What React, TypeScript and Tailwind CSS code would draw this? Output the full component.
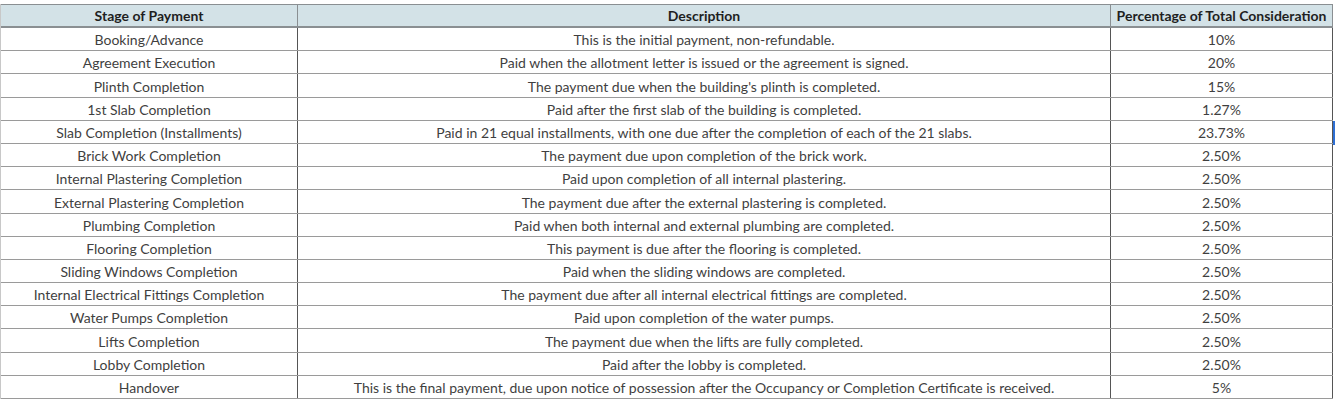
const rows: [string, string, string][] = [
    ['Booking/Advance', 'This is the initial payment, non-refundable.', '10%'],
    ['Agreement Execution', 'Paid when the allotment letter is issued or the agreement is signed.', '20%'],
    ['Plinth Completion', "The payment due when the building's plinth is completed.", '15%'],
    ['1st Slab Completion', 'Paid after the first slab of the building is completed.', '1.27%'],
    ['Slab Completion (Installments)', 'Paid in 21 equal installments, with one due after the completion of each of the 21 slabs.', '23.73%'],
    ['Brick Work Completion', 'The payment due upon completion of the brick work.', '2.50%'],
    ['Internal Plastering Completion', 'Paid upon completion of all internal plastering.', '2.50%'],
    ['External Plastering Completion', 'The payment due after the external plastering is completed.', '2.50%'],
    ['Plumbing Completion', 'Paid when both internal and external plumbing are completed.', '2.50%'],
    ['Flooring Completion', 'This payment is due after the flooring is completed.', '2.50%'],
    ['Sliding Windows Completion', 'Paid when the sliding windows are completed.', '2.50%'],
    ['Internal Electrical Fittings Completion', 'The payment due after all internal electrical fittings are completed.', '2.50%'],
    ['Water Pumps Completion', 'Paid upon completion of the water pumps.', '2.50%'],
    ['Lifts Completion', 'The payment due when the lifts are fully completed.', '2.50%'],
    ['Lobby Completion', 'Paid after the lobby is completed.', '2.50%'],
    ['Handover', 'This is the final payment, due upon notice of possession after the Occupancy or Completion Certificate is received.', '5%'],
]

const cell = 'flex items-end justify-center pb-[2px] leading-[16px] whitespace-nowrap border-r'

export default function App() {
    return (
        <div className="w-[1336px] h-[400px] overflow-hidden bg-white pt-[4px] font-['Lato',_'Open_Sans',_sans-serif] text-[14px] text-[#3f3f3f]">
            <div className="flex">
                <div className="w-[1333px] border-l border-[#c8c8c8]">
                    <div className="grid grid-cols-[297px_813px_222px] h-[24px] bg-[#d3e2e7] border-t border-b-2 border-[#8a8f92] font-bold text-[#1f1f1f]">
                        <div className={cell + ' border-[#8a8f92]'}>Stage of Payment</div>
                        <div className={cell + ' border-[#8a8f92]'}>Description</div>
                        <div className={cell + ' border-[#8a8f92]'}>Percentage of Total Consideration</div>
                    </div>
                    {rows.map((r, i) => (
                        <div key={i} className="grid grid-cols-[297px_813px_222px] h-[23.2px] border-b border-[#9a9a9a]">
                            <div className={cell + ' border-[#555]'}>{r[0]}</div>
                            <div className={cell + ' border-[#555]'}>{r[1]}</div>
                            <div className={cell + ' border-[#555]'}>{r[2]}</div>
                        </div>
                    ))}
                </div>
                <div className="flex-1 pt-[117px]">
                    <div className="w-[2px] h-[24px] bg-[#2e6fd4]" />
                </div>
            </div>
        </div>
    )
}
